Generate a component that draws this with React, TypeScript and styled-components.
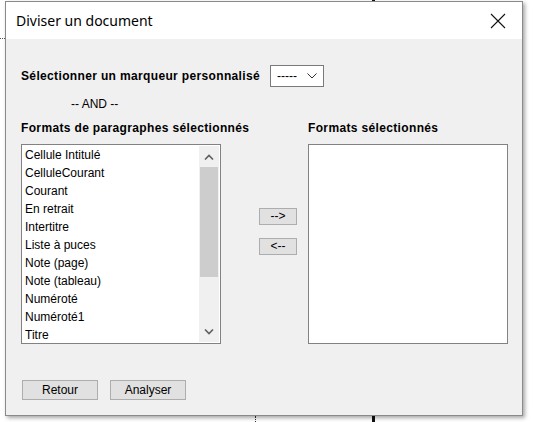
import React from 'react';
import styled, { createGlobalStyle } from 'styled-components';

const GlobalStyle = createGlobalStyle`
    html, body {
        margin: 0;
        padding: 0;
        background: #ffffff;
        width: 533px;
        height: 422px;
        overflow: hidden;
    }
    * {
        box-sizing: border-box;
    }
`;

const Desk = styled.div`
    position: relative;
    width: 533px;
    height: 422px;
    padding: 1px 0 0 5px;
    font-family: "Liberation Sans", Arial, sans-serif;
    font-size: 12px;
    color: #000;
`;

const DottedLine = styled.div`
    position: absolute;
    left: 0;
    top: 38px;
    width: 5px;
    border-top: 1px dotted #555;
`;

const DottedDrop = styled.div`
    position: absolute;
    left: 255px;
    top: 416px;
    height: 6px;
    border-left: 1px dotted #333;
`;

const BlackLine = styled.div`
    position: absolute;
    left: 372px;
    top: 0;
    width: 3px;
    height: 422px;
    background: #111;
`;

const Window = styled.div`
    position: relative;
    z-index: 1;
    width: 518px;
    height: 415px;
    border: 1px solid #8a8a8a;
    background: #f0f0f0;
    box-shadow: 2px 2px 4px rgba(0, 0, 0, 0.35);
    display: flex;
    flex-direction: column;
`;

const TitleBar = styled.div`
    height: 37px;
    flex: none;
    background: #ffffff;
    display: flex;
    align-items: center;
    justify-content: space-between;
    padding: 0 16px 0 10px;
`;

const Title = styled.span`
    font-family: "Noto Sans", "Segoe UI", sans-serif;
    font-size: 14px;
    color: #000;
    margin-top: -1px;
`;

const CloseIcon = styled.svg`
    width: 16px;
    height: 16px;
    display: block;
`;

const Body = styled.div`
    flex: 1;
    padding: 26px 0 0 15px;
    display: flex;
    flex-direction: column;
`;

const MarkerRow = styled.div`
    display: flex;
    align-items: center;
    gap: 10px;
    height: 22px;
`;

const BoldLabel = styled.span`
    font-weight: bold;
    font-size: 12px;
    letter-spacing: 0.35px;
    white-space: nowrap;
`;

const Combo = styled.div`
    width: 54px;
    height: 22px;
    background: #fff;
    border: 1px solid #7a7a7a;
    display: flex;
    align-items: center;
    justify-content: space-between;
    padding: 0 6px 0 6px;
`;

const AndText = styled.div`
    margin: 10px 0 0 50px;
    line-height: 15px;
`;

const Columns = styled.div`
    margin-top: 9px;
    width: 487px;
    display: grid;
    grid-template-columns: 200px 1fr 200px;
    row-gap: 8px;
`;

const Header = styled.div<{ $col: number }>`
    grid-column: ${(p) => p.$col};
    font-weight: bold;
    letter-spacing: 0.35px;
    white-space: nowrap;
    line-height: 15px;
`;

const ListBox = styled.div`
    height: 200px;
    background: #fff;
    border: 1px solid #828282;
    display: flex;
    overflow: hidden;
`;

const Items = styled.ul`
    flex: 1;
    margin: 0;
    padding: 1px 0 0 3px;
    list-style: none;
    overflow: hidden;
`;

const Item = styled.li`
    height: 18px;
    line-height: 18px;
    white-space: nowrap;
`;

const ScrollBar = styled.div`
    width: 20px;
    margin: 1px 1px 1px 0;
    background: #f0f0f0;
    display: flex;
    flex-direction: column;
`;

const ArrowBox = styled.div`
    height: 21px;
    flex: none;
    display: flex;
    align-items: center;
    justify-content: center;
`;

const Track = styled.div`
    flex: 1;
    display: flex;
    flex-direction: column;
`;

const Thumb = styled.div`
    height: 110px;
    margin: 0 1px;
    background: #cdcdcd;
`;

const Movers = styled.div`
    padding: 64px 0 0 38px;
    display: flex;
    flex-direction: column;
    gap: 13px;
`;

const SmallButton = styled.button`
    width: 38px;
    height: 17px;
    padding: 0;
    background: #e1e1e1;
    border: 1px solid #adadad;
    font-family: "Liberation Sans", Arial, sans-serif;
    font-size: 12px;
    line-height: 15px;
    color: #000;
`;

const Footer = styled.div`
    margin: 36px 0 0 1px;
    display: flex;
    gap: 12px;
`;

const ActionButton = styled.button`
    width: 76px;
    height: 20px;
    padding: 0;
    background: #e1e1e1;
    border: 1px solid #adadad;
    font-family: "Liberation Sans", Arial, sans-serif;
    font-size: 12px;
    color: #000;
`;

const formats = [
    'Cellule Intitulé',
    'CelluleCourant',
    'Courant',
    'En retrait',
    'Intertitre',
    'Liste à puces',
    'Note (page)',
    'Note (tableau)',
    'Numéroté',
    'Numéroté1',
    'Titre',
];

const Chevron = ({ up }: { up?: boolean }) => (
    <svg width="10" height="6" viewBox="0 0 10 6">
        <path
            d={up ? 'M1 5.5 L5 1.5 L9 5.5' : 'M1 0.5 L5 4.5 L9 0.5'}
            fill="none"
            stroke="#606060"
            strokeWidth="1.6"
        />
    </svg>
);

export default function App() {
    return (
        <>
            <GlobalStyle />
            <Desk>
                <BlackLine />
                <DottedLine />
                <DottedDrop />
                <Window>
                    <TitleBar>
                        <Title>Diviser un document</Title>
                        <CloseIcon viewBox="0 0 16 16">
                            <path d="M1 1 L15 15 M15 1 L1 15" stroke="#111" strokeWidth="1.1" fill="none" />
                        </CloseIcon>
                    </TitleBar>
                    <Body>
                        <MarkerRow>
                            <BoldLabel>Sélectionner un marqueur personnalisé</BoldLabel>
                            <Combo>
                                <span>-----</span>
                                <svg width="10" height="6" viewBox="0 0 10 6">
                                    <path d="M0.5 0.5 L5 5 L9.5 0.5" fill="none" stroke="#333" strokeWidth="1" />
                                </svg>
                            </Combo>
                        </MarkerRow>
                        <AndText>-- AND --</AndText>
                        <Columns>
                            <Header $col={1}>Formats de paragraphes sélectionnés</Header>
                            <Header $col={3}>Formats sélectionnés</Header>
                            <ListBox>
                                <Items>
                                    {formats.map((f) => (
                                        <Item key={f}>{f}</Item>
                                    ))}
                                </Items>
                                <ScrollBar>
                                    <ArrowBox>
                                        <Chevron up />
                                    </ArrowBox>
                                    <Track>
                                        <Thumb />
                                    </Track>
                                    <ArrowBox>
                                        <Chevron />
                                    </ArrowBox>
                                </ScrollBar>
                            </ListBox>
                            <Movers>
                                <SmallButton>--&gt;</SmallButton>
                                <SmallButton>&lt;--</SmallButton>
                            </Movers>
                            <ListBox />
                        </Columns>
                        <Footer>
                            <ActionButton>Retour</ActionButton>
                            <ActionButton>Analyser</ActionButton>
                        </Footer>
                    </Body>
                </Window>
            </Desk>
        </>
    );
}
